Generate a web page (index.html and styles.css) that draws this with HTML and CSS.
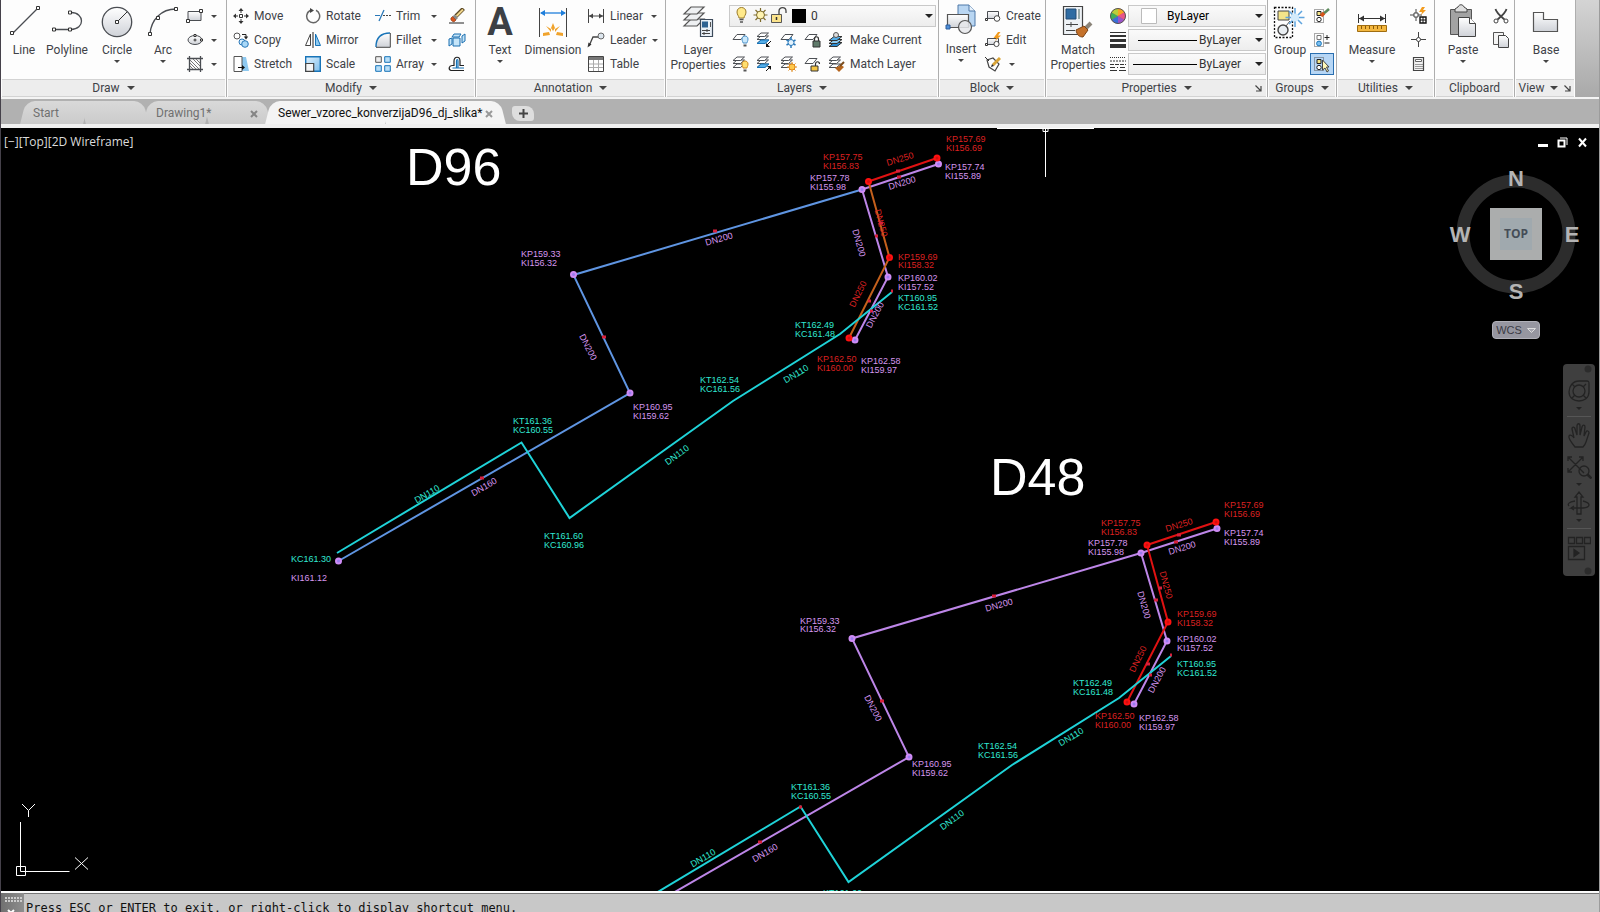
FILE: index.html
```html
<!DOCTYPE html>
<html lang="en">
<head>
<meta charset="utf-8">
<title>Sewer_vzorec_konverzijaD96_dj_slika</title>
<link rel="stylesheet" href="styles.css">
</head>
<body>
<svg class="defs" aria-hidden="true">
  <defs>
    <linearGradient id="steel" x1="0" y1="0" x2="0" y2="1"><stop offset="0" stop-color="#fff"/><stop offset="1" stop-color="#cfd2d8"/></linearGradient>
    <linearGradient id="sky" x1="0" y1="0" x2="1" y2="1"><stop offset="0" stop-color="#e4f3fd"/><stop offset="1" stop-color="#7cbdec"/></linearGradient>
    <symbol id="stack" viewBox="0 0 16 12"><g fill="#fff" stroke="#4c4f54"><path d="M1 11.500h7.500l4-3.500h-7.500z"/><path d="M1 7.500h7.500l4-3.500h-7.500z"/><path d="M1 4.500h7.500l4-3.500h-7.500z"/></g></symbol>
    <symbol id="sheet" viewBox="0 0 16 8"><path d="M1 6.500h8l4-5h-8z" fill="#fff" stroke="#4c4f54"/></symbol>
  </defs>
</svg>

<header class="ribbon">
  <section class="panel draw" aria-label="Draw">
    <div class="tools">
      <button class="big w40"><svg width="32" height="34"><path d="M5 29L29 5" stroke="#4a4d52" stroke-width="1.300"/><g fill="#fff" stroke="#333"><path d="M2.500 27.500h3v3h-3zM28.500 2.500h3v3h-3z"/></g></svg><span>Line</span></button>
      <button class="big w46"><svg width="32" height="34"><path d="M4 25.500h16c14 0 14-17 0-17" fill="none" stroke="#4a4d52" stroke-width="1.300"/><g fill="#fff" stroke="#333"><path d="M1.500 24h3v3h-3zM17.500 24h3v3h-3zM17.500 7h3v3h-3z"/></g></svg><span>Polyline</span></button>
      <button class="big w54"><svg width="34" height="36"><circle cx="17" cy="18" r="14.700" fill="url(#steel)" stroke="#4a4d52" stroke-width="1.300"/><path d="M17 18L27 8" stroke="#333"/><path d="M15.500 16.500h3v3h-3z" fill="#fff" stroke="#333"/></svg><span>Circle</span><i class="caret"></i></button>
      <button class="big w38"><svg width="32" height="34"><path d="M3 30C4 16 14 5 29 5" fill="none" stroke="#4a4d52" stroke-width="1.300"/><g fill="#fff" stroke="#333"><path d="M1.500 28.500h3v3h-3zM9.500 12.500h3v3h-3zM27.500 3.500h3v3h-3z"/></g></svg><span>Arc</span><i class="caret"></i></button>
      <div class="stack draw-more">
        <button class="row" aria-label="Rectangle"><svg width="18" height="16"><path d="M2 3.500h13v9H2z" fill="url(#steel)" stroke="#4a4d52"/><path d="M13.500 1.500h3v3h-3zM.500 11.500h3v3h-3z" fill="#fff" stroke="#333"/></svg><i class="caret"></i></button>
        <button class="row" aria-label="Ellipse"><svg width="18" height="16"><ellipse cx="9" cy="8" rx="7" ry="4.500" fill="url(#steel)" stroke="#4a4d52"/><path d="M7.500 8h3M9 6.500v3" stroke="#333"/><path d="M8 2.500h2v2H8zM14.500 7h2v2h-2z" fill="#fff" stroke="#333"/></svg><i class="caret"></i></button>
        <button class="row" aria-label="Hatch"><svg width="18" height="16"><path d="M3.500 0v16M14.500 0v16M1 2.500h16M1 13.500h16" stroke="#4a4d52" stroke-width="1.300"/><path d="M4 4l9 9M4 7l6 6M4 10l3 3M7 3l7 7M10 3l4 4" stroke="#777"/></svg><i class="caret"></i></button>
      </div>
    </div>
    <h2>Draw<i class="caret wide"></i></h2>
  </section>

  <section class="panel modify" aria-label="Modify">
    <div class="tools">
      <div class="stack w72">
        <button class="row"><svg width="16" height="16"><g stroke="#333" fill="none"><path d="M6.500 6.500h3v3h-3zM8 1v4M8 11v4M1 8h4M11 8h4"/></g><path d="M8 0l2.500 3h-5zM8 16l2.500-3h-5zM0 8l3-2.500v5zM16 8l-3-2.500v5z" fill="#333"/></svg>Move</button>
        <button class="row"><svg width="16" height="16"><circle cx="4" cy="4" r="3" fill="#fff" stroke="#555"/><path d="M9 2.500h4v3" fill="none" stroke="#222"/><path d="M10.800 4.500h4.400L13 7.500z" fill="#222"/><circle cx="9" cy="10" r="3" fill="#d5ecfb" stroke="#2a78b8"/><circle cx="12" cy="12" r="3.300" fill="#a9d8f7" stroke="#2a78b8"/></svg>Copy</button>
        <button class="row"><svg width="16" height="16"><path d="M9 1h4l3 14H9z" fill="#8ec9f0"/><path d="M1 .500h8v15H1z" fill="#fff" stroke="#555"/><path d="M5 11.500h6" stroke="#111"/><path d="M9 9l3 2.500L9 14z" fill="#111"/></svg>Stretch</button>
      </div>
      <div class="stack w70">
        <button class="row"><svg width="16" height="16"><path d="M5 2.500A6.500 6.500 0 1 0 11 2.300" fill="none" stroke="#666" stroke-width="1.500"/><path d="M5 0l4 2.500L5 5z" fill="#444"/></svg>Rotate</button>
        <button class="row"><svg width="16" height="16"><path d="M5.500 2v11.500H.500z" fill="#fff" stroke="#444"/><path d="M10.500 2v11.500h5z" fill="#8ec9f0" stroke="#1874b8"/><path d="M8 0v16" stroke="#222"/></svg>Mirror</button>
        <button class="row"><svg width="16" height="16"><path d="M.700.700h14.600v14.600H.700z" fill="url(#sky)" stroke="#1874b8" stroke-width="1.400"/><path d="M.700 7.500h8v7.800h-8z" fill="#f4f5f6" stroke="#444" stroke-width="1.200"/></svg>Scale</button>
      </div>
      <div class="stack w62">
        <button class="row"><svg width="16" height="16"><path d="M0 7.500h5" stroke="#2a78b8"/><path d="M4 13l5-11" stroke="#2a78b8" stroke-width="1.300"/><path d="M8 7.500h8" stroke="#444" stroke-dasharray="2 1"/></svg>Trim<i class="caret end"></i></button>
        <button class="row"><svg width="16" height="16"><path d="M1 15C1 6 6 1 15 1v14z" fill="url(#steel)"/><path d="M1 15C1 6 6 1 15 1" fill="none" stroke="#1874b8" stroke-width="1.400"/><path d="M15.300 1v14.300H1" fill="none" stroke="#444"/></svg>Fillet<i class="caret end"></i></button>
        <button class="row"><svg width="16" height="16"><path d="M.700.700h5.600v5.600H.700z" fill="#eee" stroke="#555"/><path d="M9.700.700h5.600v5.600H9.700zM.700 9.700h5.600v5.600H.700zM9.700 9.700h5.600v5.600H9.700z" fill="#b8def7" stroke="#1874b8"/></svg>Array<i class="caret end"></i></button>
      </div>
      <div class="stack edit-more">
        <button class="row" aria-label="Erase"><svg width="18" height="16"><path d="M15.500 .500L8 8" stroke="#5d4a26" stroke-width="4"/><path d="M15 1.500L8.500 8" stroke="#efd48a" stroke-width="2"/><path d="M6.500 6.500l3.500 3.500-2 2-3.500-3.500z" fill="#8a8a8a"/><path d="M4.500 8.500L8 12l-1.500 1.500c-1 1-4.500-1-3.500-3.500z" fill="#d7541b" stroke="#7a2c0c" stroke-width=".600"/><path d="M1 15h15" stroke="#222"/></svg></button>
        <button class="row" aria-label="Explode"><svg width="18" height="16"><g fill="#c5e5f9" stroke="#1b6fb0"><path d="M5 6h7v8H5zM6 2h7l-2 3H4zM14 4l3-2v7l-3 2zM1 7l3-1v6l-3 2z"/></g></svg></button>
        <button class="row" aria-label="Offset"><svg width="18" height="16"><path d="M16 14.500H3c-3-1-2-5 1-5h2V5c0-5 6-5 6 0v4.500h4" fill="none" stroke="#222" stroke-width="1.200"/><path d="M16 12H4.500M8.500 12V5c0-2 1.500-2 1.500 0v7" fill="none" stroke="#1874b8" stroke-width="1.200"/></svg></button>
      </div>
    </div>
    <h2>Modify<i class="caret wide"></i></h2>
  </section>

  <section class="panel annotation" aria-label="Annotation">
    <div class="tools">
      <button class="big w40"><span class="glyph">A</span><span>Text</span><i class="caret"></i></button>
      <button class="big w60"><svg width="30" height="34"><path d="M1.500 4v29M28.500 4v29" stroke="#444"/><path d="M3 9h24" stroke="#1f7fdb" stroke-width="1.300"/><path d="M2 9l5-3v6zM28 9l-5-3v6z" fill="#1f7fdb"/><path d="M15 19l2 5-2 3-2-3zM8 22l5 3v3zM22 22l-5 3v3zM5 29l6-1 1 3-7 1zM25 29l-6-1-1 3 7 1z" fill="#f0a32c"/></svg><span>Dimension</span></button>
      <div class="stack annot-list">
        <button class="row"><svg width="18" height="16"><path d="M1.500 1v14M16.500 1v14M2 8h14" stroke="#444"/><path d="M2 8l4-2.500v5zM16 8l-4-2.500v5z" fill="#444"/></svg>Linear<i class="caret end"></i></button>
        <button class="row"><svg width="18" height="16"><path d="M2 14l4-9h6" fill="none" stroke="#444" stroke-width="1.300"/><path d="M.500 15.500l1-5 3 2z" fill="#333"/><circle cx="14" cy="4" r="3" fill="#dde6ee" stroke="#666"/></svg>Leader<i class="caret end"></i></button>
        <button class="row"><svg width="18" height="16"><path d="M1.500.500h15v15h-15z" fill="#fff" stroke="#444"/><path d="M2 1h14v3H2z" fill="#777"/><path d="M2 8h14M2 11.500h14M6.500 4v11M11.500 4v11" stroke="#aaa"/></svg>Table</button>
      </div>
    </div>
    <h2>Annotation<i class="caret wide"></i></h2>
  </section>

  <section class="panel layers" aria-label="Layers">
    <div class="tools">
      <button class="big w60"><svg width="32" height="34"><g fill="#eef0f2" stroke="#555" stroke-width="1.200"><path d="M2 22h13l7-7H9z"/><path d="M2 16h13l7-7H9z"/><path d="M2 10h13l7-7H9z"/></g><path d="M18.500 15.500h12v17h-12z" fill="#eaf1f8" stroke="#3c4a5a" stroke-width="1.200"/><path d="M20 17.500h6v6h-6z" fill="#2d6292"/><path d="M28.500 18v5" stroke="#555"/><path d="M20 26.500h8M20 29.500h8M25 25v3M22 28v3" stroke="#444"/></svg><span>Layer<br>Properties</span></button>
      <div class="layer-grid">
        <div class="combo layer-combo">
          <svg width="74" height="20"><path d="M4 6c0-6 9-6 9 0 0 3-2 4-2 6H6c0-2-2-3-2-6z" fill="#ffe98a" stroke="#9a7b2a"/><path d="M6.500 13.500h4M7 16h3" stroke="#555" stroke-width="1.400"/><g stroke="#7d6a2a" stroke-width="1.200"><path d="M27.500 2v14M20.500 9h14M22.500 4l10 10M32.500 4l-10 10"/></g><circle cx="27.500" cy="9" r="4" fill="#fff3b0" stroke="#7d6a2a"/><path d="M46 8V5c0-4.500 7-4.500 7 0v2" fill="none" stroke="#444" stroke-width="1.300"/><path d="M38.500 8.500h10v8h-10z" fill="#fbe38b" stroke="#555"/><path d="M43.500 11v3" stroke="#333" stroke-width="1.500"/><path d="M59 3h14v14H59z" fill="#000"/></svg>
          <select aria-label="Layer"><option>0</option></select><i class="caret wide"></i>
        </div>
        <div class="icon-row">
          <button aria-label="Off"><svg width="18" height="16"><use href="#sheet" width="16" height="8" y="1"/><path d="M10 7c0-4 6-4 6 0 0 2-1 3-1 4h-4c0-1-1-2-1-4z" fill="#c9e8fb" stroke="#4a90c8"/><path d="M11.500 13.500h3" stroke="#555" stroke-width="2"/></svg></button>
          <button aria-label="Isolate"><svg width="18" height="16"><use href="#stack" width="16" height="12"/><path d="M1 11.500h8l4-3.500H5z" fill="#55aee8" stroke="#1874b8"/><path d="M15 9l-4 4" stroke="#111"/><path d="M10 15v-4l4 4z" fill="#111"/></svg></button>
          <button aria-label="Freeze"><svg width="18" height="16"><use href="#sheet" width="16" height="8" y="1"/><g stroke="#2a78b8" fill="#e4f3fd"><path d="M11 5v11M6.500 8l9 5M15.500 8l-9 5" stroke-width="1.500"/><circle cx="11" cy="10.500" r="3"/></g></svg></button>
          <button aria-label="Lock"><svg width="18" height="16"><use href="#sheet" width="16" height="8" y="1"/><path d="M10.500 9V7c0-3 4-3 4 0v2" fill="none" stroke="#333" stroke-width="1.200"/><path d="M9 9h7v6H9z" fill="#5f7a6a" stroke="#333"/></svg></button>
          <button class="row"><svg width="18" height="16"><path d="M1 14.500h8l5-4H6z" fill="#2b8bd0" stroke="#333"/><path d="M1 11.500h8l5-4H6z" fill="#8dcbf2" stroke="#333"/><path d="M1 8.500h8l5-4H6z" fill="#55aee8" stroke="#333"/><circle cx="8" cy="3" r="2.500" fill="#ddd" stroke="#555"/></svg>Make Current</button>
        </div>
        <div class="icon-row">
          <button aria-label="Turn all layers on"><svg width="18" height="16"><use href="#stack" width="16" height="12"/><path d="M10 8c0-4 6-4 6 0 0 2-1 3-1 4h-4c0-1-1-2-1-4z" fill="#ffdf70" stroke="#d08a1c"/><path d="M11.500 14.500h3" stroke="#555" stroke-width="2"/></svg></button>
          <button aria-label="Unisolate"><svg width="18" height="16"><use href="#stack" width="16" height="12"/><path d="M1 11.500h8l4-3.500H5z" fill="#55aee8" stroke="#1874b8"/><path d="M10 15l4-4" stroke="#111"/><path d="M15 10v4l-4-4z" fill="#111"/></svg></button>
          <button aria-label="Thaw all layers"><svg width="18" height="16"><use href="#stack" width="16" height="12"/><path d="M12 6v10M7 11h10M8.500 7.500l7 7M15.500 7.500l-7 7" stroke="#e08a1c"/><circle cx="12" cy="11" r="3" fill="#ffc94d" stroke="#e08a1c"/></svg></button>
          <button aria-label="Unlock"><svg width="18" height="16"><use href="#sheet" width="16" height="8" y="1"/><path d="M11.500 10V8c0-3 4-3 4 0" fill="none" stroke="#333" stroke-width="1.200"/><path d="M7 10h7v5H7z" fill="#f5c542" stroke="#333"/></svg></button>
          <button class="row"><svg width="18" height="16"><use href="#stack" width="16" height="12"/><path d="M7 12l6-3 3 2-5 5z" fill="#b5651d"/><path d="M12 10l4-4" stroke="#7a4a1a" stroke-width="2"/></svg>Match Layer</button>
        </div>
      </div>
    </div>
    <h2>Layers<i class="caret wide"></i></h2>
  </section>

  <section class="panel block" aria-label="Block">
    <div class="tools">
      <button class="big w40 insert"><svg width="32" height="34"><path d="M13 2h11l6 6v15H13z" fill="#b9d6f2" stroke="#4f79a8"/><path d="M24 2v6h6" fill="#e8f2fb" stroke="#4f79a8"/><path d="M2.500 11.500h21v13h-21z" fill="url(#steel)" stroke="#555" stroke-width="1.200"/><circle cx="20" cy="24" r="6.500" fill="#e6e8eb" fill-opacity=".850" stroke="#555" stroke-width="1.200"/><path d="M1 22h4v4H1z" fill="#4f8fd8" stroke="#2d5f9e"/></svg><span>Insert</span><i class="caret"></i></button>
      <div class="stack block-list">
        <button class="row"><svg width="16" height="16"><path d="M2.500 3.500h11v7h-11z" fill="url(#steel)" stroke="#4a4d52"/><circle cx="12" cy="10.500" r="2.800" fill="#fff" stroke="#444"/><path d="M.500 10.500h2v2h-2z" fill="#fff" stroke="#333"/></svg>Create</button>
        <button class="row"><svg width="16" height="16"><path d="M2.500 6.500h11v6h-11z" fill="url(#steel)" stroke="#4a4d52"/><circle cx="11.500" cy="12" r="2.600" fill="#fff" stroke="#444"/><path d="M.500 11.500h2v2h-2z" fill="#fff" stroke="#333"/><path d="M13 0L8.500 6h3L10 9l6-5.500h-3L15.500 0z" fill="#f39b1d"/></svg>Edit</button>
        <button class="row" aria-label="Edit attributes"><svg width="16" height="16"><path d="M2 4l6-2 6 6-4 7-6-4z" fill="#fff" stroke="#444" stroke-width="1.200"/><path d="M0 1l4 4" stroke="#333"/><path d="M15 2L8 9" stroke="#d9a437" stroke-width="3"/><path d="M7 8l2 2-3 1z" fill="#222"/></svg><i class="caret gap"></i></button>
      </div>
    </div>
    <h2>Block<i class="caret wide"></i></h2>
  </section>

  <section class="panel properties" aria-label="Properties">
    <div class="tools">
      <button class="big w60"><svg width="32" height="34"><path d="M1.500 2.500h19v28h-19z" fill="#eef2f6" stroke="#444" stroke-width="1.200"/><path d="M4 5h10v10H4z" fill="#2f6ca3" stroke="#244d75"/><path d="M17 5v10" stroke="#9aa" stroke-width="2"/><path d="M4 20.500h12M4 26.500h9M9 18v5" stroke="#444"/><path d="M29 19l-7 7" stroke="#8a8378" stroke-width="4"/><path d="M14 26l8-4 4 4-5 7c-4 0-6-2-7-7z" fill="#c4712a" stroke="#7c4316"/></svg><span>Match<br>Properties</span></button>
      <div class="prop-grid">
        <svg width="16" height="16"><circle cx="8" cy="8" r="7.500" fill="#e5533c"/><path d="M8 8V.500A7.500 7.500 0 0 1 14.500 4.200z" fill="#f5a623"/><path d="M8 8l6.500-3.800a7.500 7.500 0 0 1 0 7.600z" fill="#e8548a"/><path d="M8 8l6.500 3.800A7.500 7.500 0 0 1 8 15.500z" fill="#9a55c8"/><path d="M8 8v7.500a7.500 7.500 0 0 1-6.500-3.700z" fill="#3a6fd8"/><path d="M8 8l-6.500 3.800a7.500 7.500 0 0 1 0-7.600z" fill="#3fae5a"/><path d="M8 8L1.500 4.200A7.500 7.500 0 0 1 8 .500z" fill="#b8cf3a"/><circle cx="8" cy="8" r="7.500" fill="none" stroke="#555"/></svg>
        <div class="combo color-combo"><svg class="swatch" width="16" height="16"><path d="M.500.500h15v15H.500z" fill="#fff" stroke="#bbb"/></svg><select aria-label="Object color"><option>ByLayer</option></select><i class="caret wide"></i></div>
        <svg width="16" height="16"><path d="M0 .500h16" stroke="#333"/><path d="M0 4h16" stroke="#333" stroke-width="2"/><path d="M0 8.500h16" stroke="#333" stroke-width="3"/><path d="M0 14h16" stroke="#333" stroke-width="4"/></svg>
        <div class="combo line-combo"><i class="sample short"></i><select aria-label="Lineweight"><option>ByLayer</option></select><i class="caret wide"></i></div>
        <svg width="16" height="16"><path d="M0 1.500h16" stroke="#333" stroke-dasharray="1 1"/><path d="M0 5h16" stroke="#333" stroke-dasharray="2 1"/><path d="M0 8.500h16" stroke="#333" stroke-dasharray="4 1"/><path d="M0 11.500h16" stroke="#333" stroke-dasharray="5 2 1 2"/><path d="M0 14.500h16" stroke="#333" stroke-dasharray="7 2"/></svg>
        <div class="combo line-combo"><i class="sample"></i><select aria-label="Linetype"><option>ByLayer</option></select><i class="caret wide"></i></div>
      </div>
    </div>
    <h2>Properties<i class="caret wide"></i><button class="launch" aria-label="Properties settings"><svg width="7" height="7"><path d="M.500.500l5 5M6 1v5H1" fill="none" stroke="#444" stroke-width="1.200"/></svg></button></h2>
  </section>

  <section class="panel groups" aria-label="Groups">
    <div class="tools">
      <button class="big w38"><svg width="34" height="36"><path d="M1.500 3.500h18v30h-18z" fill="none" stroke="#111" stroke-dasharray="2 1.500" stroke-width="1.300"/><path d="M5 7h11v9H5z" fill="#f4e58a" stroke="#444"/><circle cx="10" cy="26" r="5" fill="#e9eef2" stroke="#444" stroke-width="1.400"/><path d="M13 22l4-5" stroke="#555"/><path d="M22 4v19M12.500 13.500h19M16 7l13 13M29 7L16 20" stroke="#5ea4de" stroke-width="1.500"/><circle cx="22" cy="13.500" r="4" fill="#d4ebfb"/></svg><span>Group</span></button>
      <div class="stack squares">
        <button aria-label="Ungroup"><svg width="18" height="18"><path d="M1.500 2.500h9v13h-9z" fill="none" stroke="#555" stroke-dasharray="1 1"/><path d="M4 4.500h4v4H4z" fill="#f4e58a" stroke="#222"/><circle cx="6" cy="12.500" r="2.200" fill="#fff" stroke="#222"/><path d="M16 2L9 8" stroke="#5b8a5b" stroke-width="2.500"/><path d="M11 6L8 9" stroke="#d7541b" stroke-width="3.500"/></svg></button>
        <button aria-label="Group edit"><svg width="18" height="18"><path d="M1.500 2.500h9v13h-9z" fill="none" stroke="#555" stroke-dasharray="1 1"/><path d="M4 4.500h4v4H4z" fill="#fff" stroke="#777"/><circle cx="6" cy="12.500" r="2.400" fill="#7cc0f0" stroke="#1874b8"/><path d="M14 4v5M11.500 6.500h5M11.500 12h5" stroke="#222"/></svg></button>
        <button class="active" aria-label="Group selection on or off"><svg width="18" height="18"><path d="M1.500 2.500h9v13h-9z" fill="none" stroke="#555" stroke-dasharray="1 1"/><path d="M4 4.500h4v4H4z" fill="#f4e58a" stroke="#222"/><circle cx="6" cy="12.500" r="2.200" fill="#fff" stroke="#222"/><path d="M9.500 5v10l2.500-2 2 4 1.500-1-2-4h2.500z" fill="#fff8b8" stroke="#444"/></svg></button>
      </div>
    </div>
    <h2>Groups<i class="caret wide"></i></h2>
  </section>

  <section class="panel utilities" aria-label="Utilities">
    <div class="tools">
      <button class="big w60"><svg width="30" height="34"><path d="M1.500 10v9M28.500 10v9M2 14.500h26" stroke="#333"/><path d="M2 14.500l5-3v6zM28 14.500l-5-3v6z" fill="#333"/><path d="M.500 21.500h29v6H.500z" fill="#f3b73f" stroke="#a06d10"/><path d="M4.500 22v3M8.500 22v3M12.500 22v3M16.500 22v3M20.500 22v3M24.500 22v3" stroke="#8a5a08"/></svg><span>Measure</span><i class="caret"></i></button>
      <div class="stack">
        <button class="row" aria-label="Quick select"><svg width="18" height="18"><path d="M6 2v12M0 8h12" stroke="#444"/><path d="M4 6h4v4H4z" fill="#fff" stroke="#444"/><path d="M12 0L9 5h3l-1 3 5-5h-3l2-3z" fill="#f39b1d"/><path d="M10 10h6v6h-6z" fill="#fff" stroke="#111" stroke-width="1.400"/><path d="M13 10v6M10 13h6" stroke="#111"/></svg></button>
        <button class="row" aria-label="Point style"><svg width="18" height="18"><path d="M8.500 1v15M1 8.500h15" stroke="#444"/><circle cx="8.500" cy="8.500" r="2" fill="#fff" stroke="#444"/></svg></button>
        <button class="row" aria-label="Calculator"><svg width="18" height="18"><path d="M3.500 2.500h10v13h-10z" fill="#f2f2f2" stroke="#444" stroke-width="1.200"/><path d="M5.500 4.500h6v2h-6z" fill="#fff" stroke="#666"/><path d="M5.500 9.500h7M5.500 11.500h7M5.500 13.500h7" stroke="#444" stroke-dasharray="1 1"/></svg></button>
      </div>
    </div>
    <h2>Utilities<i class="caret wide"></i></h2>
  </section>

  <section class="panel clipboard" aria-label="Clipboard">
    <div class="tools">
      <button class="big w54"><svg width="32" height="36"><path d="M3.500 5.500h21v25h-21z" fill="#a3a3a3" stroke="#555"/><path d="M8 8V5l3-2c1-3 5-3 6 0l3 2v3z" fill="#dedede" stroke="#444"/><path d="M11.500 13.500h11l6 6v13h-17z" fill="url(#steel)" stroke="#444"/><path d="M22.500 13.500v6h6" fill="#fff" stroke="#444"/></svg><span>Paste</span><i class="caret"></i></button>
      <div class="stack">
        <button class="row" aria-label="Cut"><svg width="18" height="16"><path d="M3.500 1c1 4 5 7 9 10.500M14.500 1c-1 4-5 7-9 10.500" fill="none" stroke="#444" stroke-width="1.800"/><circle cx="4" cy="13" r="2" fill="#fff" stroke="#444"/><circle cx="14" cy="13" r="2" fill="#fff" stroke="#444"/></svg></button>
        <button class="row" aria-label="Copy to clipboard"><svg width="18" height="16"><path d="M1.500.500h10v12h-10z" fill="#f4f4f4" stroke="#555"/><path d="M6.500 3.500h7l3 3v9h-10z" fill="url(#steel)" stroke="#444"/></svg></button>
      </div>
    </div>
    <h2>Clipboard</h2>
  </section>

  <section class="panel view" aria-label="View">
    <div class="tools">
      <button class="big w54"><svg width="30" height="34"><path d="M2.500 8.500h10v7h14v12h-24z" fill="url(#steel)" stroke="#555" stroke-width="1.200"/></svg><span>Base</span><i class="caret"></i></button>
    </div>
    <h2>View<i class="caret wide"></i><button class="launch" aria-label="View settings"><svg width="7" height="7"><path d="M.500.500l5 5M6 1v5H1" fill="none" stroke="#444" stroke-width="1.200"/></svg></button></h2>
  </section>
</header>

<nav class="tabs">
  <div class="tab start"><a href="#">Start</a></div>
  <div class="tab drawing"><a href="#">Drawing1*</a><button aria-label="Close Drawing1"><svg width="8" height="8"><path d="M1 1l6 6M7 1L1 7" stroke="#858585" stroke-width="2"/></svg></button></div>
  <div class="tab current"><a href="#">Sewer_vzorec_konverzijaD96_dj_slika*</a><button aria-label="Close drawing"><svg width="8" height="8"><path d="M1 1l6 6M7 1L1 7" stroke="#999" stroke-width="2"/></svg></button></div>
  <button class="tab-new" aria-label="New drawing"><svg width="9" height="9"><path d="M4.500 0v9M0 4.500h9" stroke="#444" stroke-width="2"/></svg></button>
</nav>

<main class="canvas">
  <svg class="drawing-space" width="100%" height="100%">
    <defs>
      <g id="cyan-run"><path d="M337 553L521.500 442.500L569.500 518L733 401L840 334L892 292"/></g>
    </defs>
    <g transform="translate(-1 -128)">
      <g class="title"><text x="406" y="185">D96</text><text x="990" y="495">D48</text></g>

      <g class="pipe blue"><path d="M338.500 561L630 393L573.500 275L862 189.500"/></g>
      <g class="pipe violet"><path d="M862 189.500L938.500 164M862 189.500L888 277L855 340"/></g>
      <g class="pipe red"><path d="M868.500 181.500L937 158"/></g>
      <g class="pipe amber"><path d="M868.500 181.500L889.500 257.500L849 338"/></g>
      <use href="#cyan-run" class="pipe cyan"/>
      <g class="pipe violet"><path d="M617.500 925L909 757L852 638.500L1141 553L1217 528.500M1141 553L1167 641L1134 704"/></g>
      <g class="pipe red"><path d="M1216 522L1147 545L1168 622L1127 702"/></g>
      <use href="#cyan-run" class="pipe cyan" x="279" y="364"/>

      <g class="node violet-node"><circle cx="338.500" cy="561" r="2.500"/><circle cx="630" cy="393" r="2.500"/><circle cx="573.500" cy="274.500" r="2.500"/><circle cx="862" cy="189.500" r="2.500"/><circle cx="938.500" cy="164" r="2.500"/><circle cx="888" cy="277" r="2.500"/><circle cx="855" cy="340" r="2.500"/>
      <circle cx="909" cy="757" r="2.500"/><circle cx="852" cy="638.500" r="2.500"/><circle cx="1141" cy="553" r="2.500"/><circle cx="1217" cy="528.500" r="2.500"/><circle cx="1167" cy="641" r="2.500"/><circle cx="1134" cy="704" r="2.500"/></g>
      <g class="node red-node"><circle cx="868.500" cy="181.500" r="2.500"/><circle cx="937" cy="158" r="2.500"/><circle cx="889.500" cy="257.500" r="2.500"/><circle cx="849" cy="338" r="2.500"/>
      <circle cx="1147" cy="545" r="2.500"/><circle cx="1216" cy="522" r="2.500"/><circle cx="1168" cy="622" r="2.500"/><circle cx="1127" cy="702" r="2.500"/></g>
      <g class="mark"><path d="M480 478h4M713 231h4M602 337h4M875 236h3M879 223h4M868 301h3M896 171h4M897 177h4M870 311h3M891 291h2M758 842h4M992 596h4M880 701h4M1154 600h4M1158 588h4M1146 664h4M1177 535h4M1174 542h4M1149 675h3M1170 655h2M799 807h3"/></g>

      <g class="violet-text">
        <text x="810" y="181">KP157.78<tspan x="810" dy="9">KI155.98</tspan></text>
        <text x="945" y="170">KP157.74<tspan x="945" dy="9">KI155.89</tspan></text>
        <text x="898" y="281">KP160.02<tspan x="898" dy="9">KI157.52</tspan></text>
        <text x="861" y="364">KP162.58<tspan x="861" dy="9">KI159.97</tspan></text>
        <text x="521" y="257">KP159.33<tspan x="521" dy="9">KI156.32</tspan></text>
        <text x="633" y="410">KP160.95<tspan x="633" dy="9">KI159.62</tspan></text>
        <text x="291" y="581">KI161.12</text>
        <text x="1088" y="546">KP157.78<tspan x="1088" dy="9">KI155.98</tspan></text>
        <text x="1224" y="536">KP157.74<tspan x="1224" dy="9">KI155.89</tspan></text>
        <text x="1177" y="642">KP160.02<tspan x="1177" dy="9">KI157.52</tspan></text>
        <text x="1139" y="721">KP162.58<tspan x="1139" dy="9">KI159.97</tspan></text>
        <text x="800" y="624">KP159.33<tspan x="800" dy="8">KI156.32</tspan></text>
        <text x="912" y="767">KP160.95<tspan x="912" dy="9">KI159.62</tspan></text>
        <g class="turned">
          <text transform="translate(719 239) rotate(-16)" y="3">DN200</text>
          <text transform="translate(588 347) rotate(63)" y="3">DN200</text>
          <text transform="translate(484 487) rotate(-30)" y="3">DN160</text>
          <text transform="translate(902 183) rotate(-17)" y="3">DN200</text>
          <text transform="translate(859 243) rotate(74)" y="3">DN200</text>
          <text transform="translate(875 315) rotate(-62)" y="3">DN200</text>
          <text transform="translate(999 605) rotate(-16)" y="3">DN200</text>
          <text transform="translate(873 708) rotate(63)" y="3">DN200</text>
          <text transform="translate(765 853) rotate(-30)" y="3">DN160</text>
          <text transform="translate(1182 548) rotate(-17)" y="3">DN200</text>
          <text transform="translate(1144 605) rotate(74)" y="3">DN200</text>
          <text transform="translate(1157 680) rotate(-62)" y="3">DN200</text>
        </g>
      </g>
      <g class="red-text">
        <text x="946" y="142">KP157.69<tspan x="946" dy="9">KI156.69</tspan></text>
        <text x="823" y="160">KP157.75<tspan x="823" dy="9">KI156.83</tspan></text>
        <text x="898" y="260">KP159.69<tspan x="898" dy="8">KI158.32</tspan></text>
        <text x="817" y="362">KP162.50<tspan x="817" dy="9">KI160.00</tspan></text>
        <text x="1224" y="508">KP157.69<tspan x="1224" dy="9">KI156.69</tspan></text>
        <text x="1101" y="526">KP157.75<tspan x="1101" dy="9">KI156.83</tspan></text>
        <text x="1177" y="617">KP159.69<tspan x="1177" dy="9">KI158.32</tspan></text>
        <text x="1095" y="719">KP162.50<tspan x="1095" dy="9">KI160.00</tspan></text>
        <g class="turned">
          <text transform="translate(900 159) rotate(-17)" y="3">DN250</text>
          <text transform="translate(881 223) rotate(75)" y="3">DN250</text>
          <text transform="translate(858 294) rotate(-64)" y="3">DN250</text>
          <text transform="translate(1179 525) rotate(-17)" y="3">DN250</text>
          <text transform="translate(1166 585) rotate(75)" y="3">DN250</text>
          <text transform="translate(1138 659) rotate(-64)" y="3">DN250</text>
        </g>
      </g>
      <g class="cyan-text">
        <text x="898" y="301">KT160.95<tspan x="898" dy="9">KC161.52</tspan></text>
        <text x="795" y="328">KT162.49<tspan x="795" dy="9">KC161.48</tspan></text>
        <text x="700" y="383">KT162.54<tspan x="700" dy="9">KC161.56</tspan></text>
        <text x="513" y="424">KT161.36<tspan x="513" dy="9">KC160.55</tspan></text>
        <text x="544" y="539">KT161.60<tspan x="544" dy="9">KC160.96</tspan></text>
        <text x="291" y="562">KC161.30</text>
        <text x="1177" y="667">KT160.95<tspan x="1177" dy="9">KC161.52</tspan></text>
        <text x="1073" y="686">KT162.49<tspan x="1073" dy="9">KC161.48</tspan></text>
        <text x="978" y="749">KT162.54<tspan x="978" dy="9">KC161.56</tspan></text>
        <text x="791" y="790">KT161.36<tspan x="791" dy="9">KC160.55</tspan></text>
        <text x="823" y="896">KT161.60</text>
        <g class="turned">
          <text transform="translate(427 494) rotate(-30)" y="3">DN110</text>
          <text transform="translate(677 455) rotate(-36)" y="3">DN110</text>
          <text transform="translate(796 374) rotate(-31)" y="3">DN110</text>
          <text transform="translate(703 858) rotate(-30)" y="3">DN110</text>
          <text transform="translate(952 820) rotate(-36)" y="3">DN110</text>
          <text transform="translate(1071 737) rotate(-31)" y="3">DN110</text>
        </g>
      </g>

      <g class="ucs">
        <path d="M20.500 822v49.500h49M16.500 866.500h9v9h-9z"/>
        <path d="M22 804l6.500 6.500l6.500-6.500M28.500 810.500v6.500M75 857.500l13 12M88 857.500l-13 12"/>
        <path d="M997 128.500h97M1045.500 128v49M1043 129v2.500h5V129"/>
      </g>
    </g>
  </svg>

  <p class="viewport-label">[−][Top][2D Wireframe]</p>
  <div class="window-buttons">
    <button aria-label="Minimize"><svg width="11" height="11"><path d="M1 8.500h10" stroke="#fff" stroke-width="3"/></svg></button>
    <button aria-label="Restore"><svg width="11" height="11"><path d="M3 1h7v7" fill="none" stroke="#fff"/><path d="M1.500 3.500h6v6h-6z" fill="none" stroke="#fff" stroke-width="2"/></svg></button>
    <button aria-label="Close"><svg width="11" height="11"><path d="M2 1.500l7 8M9 1.500l-7 8" stroke="#fff" stroke-width="2"/></svg></button>
  </div>

  <div class="viewcube">
    <svg width="132" height="136" role="img" aria-label="View cube">
      <circle cx="66" cy="66" r="53" fill="none" stroke="#2c2c2c" stroke-width="13"/>
      <path d="M40 40h52v52H40z" fill="#abadad"/><path d="M50 50h32v32H50z" fill="#a0a9ae"/>
      <text x="66" y="70" class="face">TOP</text>
      <text x="66" y="18">N</text><text x="66" y="131">S</text><text x="10" y="74">W</text><text x="122" y="74">E</text>
    </svg>
    <button class="wcs">WCS<svg width="9" height="5"><path d="M.500.500h8l-4 4z" fill="#a4a4ae" stroke="#ddd"/></svg></button>
  </div>

  <div class="navbar">
    <svg class="chip" width="8" height="8"><circle cx="4" cy="4" r="3.500" fill="#2c2c2c"/></svg>
    <button aria-label="Steering wheel"><svg width="24" height="24"><path d="M12 2h8c2 0 2 1 2 3v8c0 12-20 12-20 0C2 7 6 2 12 2z"/><circle cx="12" cy="12" r="6"/><path d="M5 5l3 3M19 5l-3 3M5 19l3-3M19 19l-3-3"/></svg><i class="caret"></i></button>
    <hr>
    <button aria-label="Pan"><svg width="24" height="26"><path d="M8 24C4 19 1 15 2 13s4 0 5 2L5 6c0-3 3-2 3 0l2 6V3c0-3 3-3 3 0v9l2-8c1-3 3-2 3 0l-1 9 2-4c1-2 3-1 3 1l-3 9c-1 3-2 4-3 5z"/></svg></button>
    <button aria-label="Zoom extents"><svg width="26" height="24"><path d="M2 2l16 16M17 2L2 17M2 6V2h4M13 2h4v4M2 13v4h4"/><circle cx="18" cy="16" r="5"/><path d="M21.500 19.500l4 4" stroke-width="2.500"/></svg><i class="caret"></i></button>
    <button aria-label="Orbit"><svg width="24" height="24"><path d="M10 23V6H8l4-5 4 5h-2v17zM16 10c8 2 8 6 0 7H4l3-2M4 17l3 2M8 10c-6 1-8 3-6 5"/></svg><i class="caret"></i></button>
    <hr>
    <button aria-label="Show motion"><svg width="24" height="26"><path d="M1.500 2.500h6v6h-6zM9.500 2.500h6v6h-6zM17.500 2.500h6v6h-6zM1.500 11.500h16v13h-16z"/><path d="M7 14.500l5 3.500-5 3.500z" fill="#232323"/></svg></button>
    <svg class="chip" width="8" height="8"><circle cx="4" cy="4" r="3.500" fill="#2c2c2c"/></svg>
  </div>
</main>

<footer class="command">
  <div class="grip"><svg width="23" height="19"><path d="M4 5h17M4 8h17" stroke="#ccc" stroke-width="2" stroke-dasharray="2 1"/><path d="M7 17l6 6M13 17l-6 6" stroke="#fff" stroke-width="2"/></svg></div>
  <p>Press ESC or ENTER to exit, or right-click to display shortcut menu.</p>
</footer>
</body>
</html>
```

FILE: styles.css
```css
* { box-sizing: border-box; }

body {
  margin: 0;
  height: 100vh;
  display: flex;
  flex-direction: column;
  overflow: hidden;
  border-left: 1px solid #45414a;
  border-right: 1px solid #9c9c9c;
  background: #b1b1b1;
  color: #404247;
  font-family: Roboto, "Open Sans", sans-serif;
  font-size: 12px;
  line-height: 15px;
}

.defs { position: absolute; width: 0; height: 0; }
svg { flex: none; }

button {
  margin: 0;
  padding: 0;
  border: 0;
  background: none;
  color: inherit;
  font: inherit;
}

/* Ribbon */
.ribbon {
  display: flex;
  flex: none;
  height: 99px;
  padding-right: 23px;
  border-bottom: 2px solid #f4f4f4;
  background: linear-gradient(#d4d4d4, #a9a9a9);
}

.panel {
  display: flex;
  flex-direction: column;
  flex: 1 1 0;
  min-width: 0;
  padding: 0 1px;
  border-right: 1px solid #aeaeae;
  background: #fdfdfd;
}

.draw { flex-grow: 223; }
.modify { flex-grow: 246; }
.annotation { flex-grow: 187; }
.layers { flex-grow: 270; }
.block { flex-grow: 104; }
.properties { flex-grow: 219; }
.groups { flex-grow: 66; }
.utilities { flex-grow: 95; }
.clipboard { flex-grow: 77; }
.view { flex-grow: 58; }

.tools {
  display: flex;
  align-items: flex-start;
  height: 79px;
  padding: 4px 0 0 3px;
}

.panel h2 {
  display: flex;
  align-items: center;
  justify-content: center;
  gap: 7px;
  height: 18px;
  margin: 0;
  border-top: 1px solid #d3d3d3;
  border-bottom: 1px solid #d3d3d3;
  background: #ededed;
  font-size: 12px;
  font-weight: 400;
}

.launch { display: flex; }
.properties h2 { position: relative; }
.properties .launch { position: absolute; right: 4px; }
.view h2 { gap: 6px; }

.caret {
  flex: none;
  width: 0;
  height: 0;
  border: 3px solid transparent;
  border-top-color: #444;
  border-bottom: 0;
}
.caret.wide { border-width: 4px 4px 0; }
.caret.end { margin-left: auto; }
.caret.gap { margin-left: 3px; }

.big {
  display: flex;
  flex-direction: column;
  align-items: center;
  flex: none;
  white-space: nowrap;
}
.big svg, .glyph { height: 36px; margin-bottom: 3px; }
.big .caret { margin-top: 2px; }
.insert { margin-top: -1px; }

.glyph {
  font: 700 38px/36px Roboto, "Open Sans", sans-serif;
  color: #3d4045;
}

.w38 { width: 38px; }
.w40 { width: 40px; }
.w46 { width: 46px; }
.w54 { width: 54px; }
.w60 { width: 60px; }
.w62 { width: 62px; }
.w70 { width: 70px; }
.w72 { width: 72px; }

.stack { display: flex; flex-direction: column; flex: none; }
.stack .row { height: 24px; }
.row {
  display: flex;
  align-items: center;
  gap: 5px;
  white-space: nowrap;
}

.draw .tools { padding-left: 2px; }
.draw-more { margin-left: 4px; }
.draw-more .row { gap: 7px; }
.modify .tools { padding-left: 5px; }
.edit-more { margin-left: 11px; }
.annot-list { width: 70px; margin-left: 4px; }
.annotation .w40 { margin-right: 3px; }

.combo {
  position: relative;
  display: flex;
  align-items: center;
  height: 22px;
  border: 1px solid #c9c9c9;
  background: linear-gradient(#fafafa, #ededed);
}
.combo select {
  flex: 1;
  min-width: 0;
  height: 20px;
  padding: 0 0 0 4px;
  border: 0;
  background: none;
  appearance: none;
  color: #333;
  font: inherit;
}
.combo .caret { position: absolute; right: 2px; border-top-color: #222; }

.layers .tools { padding-left: 1px; }
.layer-grid { flex: 1; margin-left: 1px; }
.layer-combo { margin: 1px 1px 1px 0; padding-left: 3px; }
.layer-combo select { padding-left: 4px; }
.icon-row {
  display: grid;
  grid-template-columns: 24px 24px 24px 24px 1fr;
  align-items: center;
  height: 24px;
  padding-left: 3px;
}
.icon-row button { display: flex; }
.icon-row .row { gap: 4px; }

.block .tools { padding-left: 1px; }
.block-list { margin-left: 4px; }

.properties .tools { padding-left: 1px; }
.prop-grid {
  flex: 1;
  display: grid;
  grid-template-columns: 16px 1fr;
  grid-auto-rows: 22px;
  gap: 2px;
  align-items: center;
  padding: 1px 0 0 2px;
}
.swatch { margin-left: 12px; }
.color-combo select { padding-left: 10px; color: #000; }
.sample { width: 64px; height: 1px; margin-left: 4px; background: #000; }
.sample.short { width: 59px; margin-left: 9px; }
.line-combo select { padding-left: 2px; }

.groups .tools { padding-left: 0; }
.groups .w38 { margin-left: 2px; }
.squares { gap: 2px; padding-top: 1px; margin-left: 1px; }
.squares button {
  display: grid;
  place-items: center;
  width: 24px;
  height: 22px;
  border: 1px solid transparent;
}
.squares .active { border-color: #2a6fb0; background: #b6d6f5; }

.utilities .tools { padding-left: 4px; }
.utilities .stack { margin-left: 8px; }
.clipboard .w54 { margin-right: 2px; }
.clipboard .tools { padding-left: 0; }

/* File tabs */
.tabs {
  display: flex;
  align-items: flex-end;
  flex: none;
  height: 29px;
  padding-left: 22px;
  border-bottom: 4px solid #f0f0f0;
  background: #b1b1b1;
}
.tab {
  position: relative;
  z-index: 0;
  display: flex;
  align-items: center;
  justify-content: space-between;
  height: 23px;
  padding: 2px 10px 0;
  color: #707070;
}
.tab::before, .tab::after {
  content: "";
  position: absolute;
  z-index: -1;
  top: 0;
  bottom: 0;
  width: 51%;
  background: linear-gradient(#d9d9d9, #cbcbcb);
}
.tab::before { left: 0; border-radius: 9px 0 0 0; transform: skewX(-14deg); }
.tab::after { right: 0; border-radius: 0 9px 0 0; transform: skewX(14deg); }
.tab a { color: inherit; text-decoration: none; }
.tab button { display: flex; }
.start { width: 123px; }
.drawing { width: 122px; }
.current { width: 235px; color: #111; }
.current::before, .current::after { background: #f4f4f4; }
.tab-new {
  display: grid;
  place-items: center;
  width: 22px;
  height: 15px;
  margin: 0 0 3px 9px;
  border-radius: 3px 8px 3px 8px;
  background: #dedede;
}

/* Drawing area */
.canvas {
  position: relative;
  flex: 1;
  min-height: 0;
  overflow: hidden;
  background: #000;
}
.drawing-space {
  display: block;
  font-family: "Liberation Sans", Arial, sans-serif;
  font-size: 9px;
}
.title { fill: #fff; font-size: 52px; }
.pipe { fill: none; stroke-width: 2; }
.blue { stroke: #5f95e2; }
.violet { stroke: #bd86e8; }
.red { stroke: #e01212; }
.amber { stroke: #c4601c; }
.cyan { stroke: #1fd3d8; }
.node { stroke-width: 2; }
.violet-node { fill: #9a7cf0; stroke: #cf8cf5; }
.red-node { fill: #d01010; stroke: #ff1010; }
.mark { stroke: #d8203c; stroke-width: 3; }
.violet-text { fill: #d596ee; }
.red-text { fill: #dc2020; }
.cyan-text { fill: #30e8d2; }
.turned { text-anchor: middle; }
.ucs { fill: none; stroke: #fff; }

.viewport-label {
  position: absolute;
  top: 6px;
  left: 3px;
  margin: 0;
  color: #dcdcdc;
  font-family: "Open Sans", sans-serif;
}
.window-buttons {
  position: absolute;
  top: 9px;
  right: 11px;
  display: flex;
  gap: 9px;
}
.window-buttons button { display: flex; }

.viewcube {
  position: absolute;
  top: 40px;
  right: 17px;
  display: flex;
  flex-direction: column;
  align-items: center;
  gap: 17px;
}
.viewcube text {
  fill: #b4b4b4;
  font: 700 22px "Liberation Sans", Arial, sans-serif;
  text-anchor: middle;
}
.viewcube > svg { overflow: visible; }
.viewcube .face { fill: #454d57; font: 700 12px "Open Sans", sans-serif; }
.wcs {
  display: flex;
  align-items: center;
  gap: 5px;
  height: 18px;
  padding: 0 3px;
  border: 1px solid #b0b0b8;
  border-radius: 4px;
  background: #9696a0;
  color: #3a3a44;
  font: 11px "Liberation Sans", Arial, sans-serif;
}

.navbar {
  position: absolute;
  top: 236px;
  right: 4px;
  display: flex;
  flex-direction: column;
  align-items: center;
  justify-content: space-between;
  width: 32px;
  height: 212px;
  padding: 1px 3px;
  border-radius: 4px;
  background: #3f3f3f;
}
.navbar button { display: flex; flex-direction: column; align-items: center; gap: 4px; }
.navbar button svg { fill: none; stroke: #232323; stroke-width: 1.300; }
.navbar .caret { border-top-color: #222; }
.navbar hr { width: 24px; margin: 0; border: 0; border-top: 1px solid #565656; }
.chip { align-self: flex-end; }

/* Command line */
.command {
  display: flex;
  flex: none;
  height: 21px;
  border-top: 2px solid #fafafa;
  background: #c8c8c8;
  box-shadow: inset 0 1px #777;
  overflow: hidden;
}
.grip { width: 23px; background: linear-gradient(90deg, #707070, #8e8e8e); }
.command p {
  margin: 8px 0 0 2px;
  color: #111;
  font: 12px/15px "DejaVu Sans Mono", monospace;
  white-space: nowrap;
}
```
